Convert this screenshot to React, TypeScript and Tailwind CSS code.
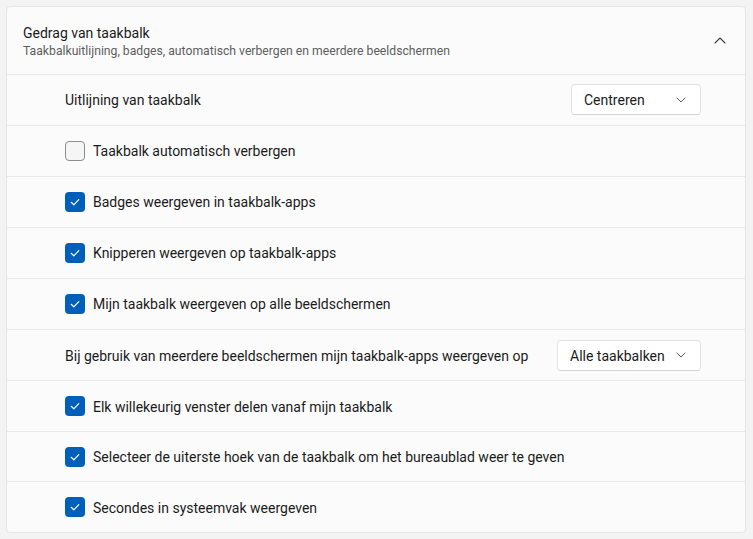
import React from "react";

const font = { fontFamily: 'Roboto, "Noto Sans", sans-serif' };

function Check({ checked }: { checked: boolean }) {
  if (!checked)
    return (
      <div className="w-5 h-5 rounded-[4px] border border-[#8d8d8d] bg-[#f5f5f5] shrink-0" />
    );
  return (
    <div className="w-5 h-5 rounded-[4px] bg-[#005fb8] shrink-0 flex items-center justify-center">
      <svg width="12" height="12" viewBox="0 0 12 12" fill="none">
        <path d="M2.2 6.3 L4.8 8.8 L9.8 3.6" stroke="white" strokeWidth="1.2" strokeLinecap="round" strokeLinejoin="round" />
      </svg>
    </div>
  );
}

function ChevronDown() {
  return (
    <svg width="10" height="6" viewBox="0 0 10 6" fill="none">
      <path d="M1 1 L5 5 L9 1" stroke="#5f5f5f" strokeWidth="1" strokeLinecap="round" strokeLinejoin="round" />
    </svg>
  );
}

function Dropdown({ label, width }: { label: string; width: string }) {
  return (
    <div
      className={`${width} h-[31px] bg-white border border-[#e3e3e3] border-b-[#d4d4d4] rounded-[4px] flex items-center justify-between pl-3 pr-[14px] text-[14px] text-[#1b1b1b] shrink-0`}
    >
      <span className="whitespace-nowrap mt-[2px]">{label}</span>
      <ChevronDown />
    </div>
  );
}

function CheckRow({ label, checked, h = "h-[51px]" }: { label: string; checked: boolean; h?: string }) {
  return (
    <div className={`${h} border-t border-[#e9e9e9] flex items-center pl-[58px] gap-2`}>
      <Check checked={checked} />
      <span className="text-[14px] text-[#1b1b1b] whitespace-nowrap mt-[2px]">{label}</span>
    </div>
  );
}

export default function App() {
  return (
    <div className="w-[753px] h-[539px] bg-[#f3f3f3] p-[6px] pr-[7px]" style={font}>
      <div className="w-[740px] h-[527px] bg-[#fbfbfb] border border-[#e5e5e5] rounded-[4px] flex flex-col overflow-hidden">
        <div className="h-[67px] flex items-center justify-between pl-4 pr-[19px]">
          <div className="flex flex-col mt-[2px]">
            <span className="text-[14px] leading-[20px] text-[#1b1b1b]">Gedrag van taakbalk</span>
            <span className="text-[12.2px] leading-[16px] text-[#5e5e5e]">
              Taakbalkuitlijning, badges, automatisch verbergen en meerdere beeldschermen
            </span>
          </div>
          <svg width="12" height="7" viewBox="0 0 12 7" fill="none">
            <path d="M1 6 L6 1 L11 6" stroke="#404040" strokeWidth="1.1" strokeLinecap="round" strokeLinejoin="round" />
          </svg>
        </div>
        <div className="h-[51px] border-t border-[#e9e9e9] flex items-center justify-between pl-[58px] pr-[44px]">
          <span className="text-[14px] text-[#1b1b1b] mt-[2px]">Uitlijning van taakbalk</span>
          <Dropdown label="Centreren" width="w-[130px]" />
        </div>
        <CheckRow label="Taakbalk automatisch verbergen" checked={false} />
        <CheckRow label="Badges weergeven in taakbalk-apps" checked />
        <CheckRow label="Knipperen weergeven op taakbalk-apps" checked />
        <CheckRow label="Mijn taakbalk weergeven op alle beeldschermen" checked h="h-[52px]" />
        <div className="h-[51px] border-t border-[#e9e9e9] flex items-center justify-between pl-[58px] pr-[44px]">
          <span className="text-[14px] text-[#1b1b1b] whitespace-nowrap mt-[2px]">
            Bij gebruik van meerdere beeldschermen mijn taakbalk-apps weergeven op
          </span>
          <Dropdown label="Alle taakbalken" width="w-[144px]" />
        </div>
        <CheckRow label="Elk willekeurig venster delen vanaf mijn taakbalk" checked />
        <CheckRow label="Selecteer de uiterste hoek van de taakbalk om het bureaublad weer te geven" checked h="h-[50px]" />
        <CheckRow label="Secondes in systeemvak weergeven" checked />
      </div>
    </div>
  );
}
